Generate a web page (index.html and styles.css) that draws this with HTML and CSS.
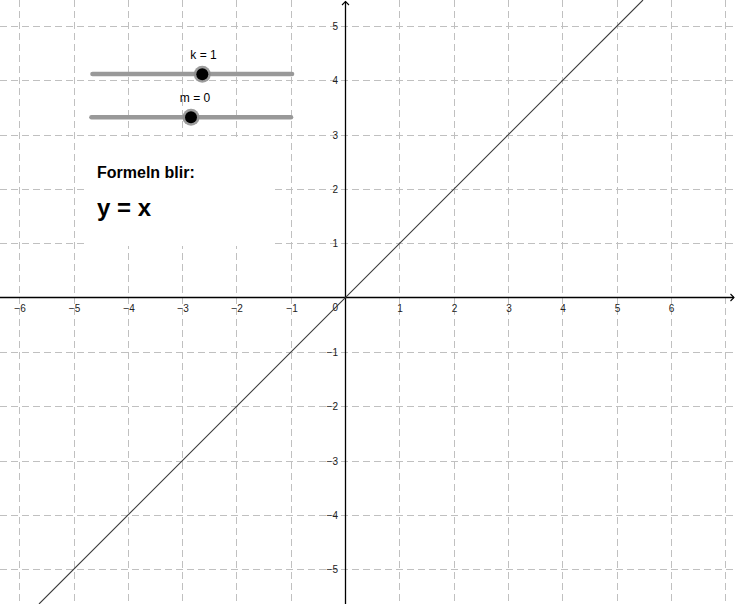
FILE: index.html
```html
<!DOCTYPE html>
<html lang="sv">
<head>
<meta charset="utf-8">
<title>Formeln blir</title>
<link rel="stylesheet" href="styles.css">
</head>
<body>
<div class="applet">
  <svg class="canvas" width="735" height="604" viewBox="0 0 735 604" xmlns="http://www.w3.org/2000/svg">
    <g class="grid">
      <line x1="19.5" y1="0" x2="19.5" y2="604"/>
      <line x1="74.5" y1="0" x2="74.5" y2="604"/>
      <line x1="128.5" y1="0" x2="128.5" y2="604"/>
      <line x1="182.5" y1="0" x2="182.5" y2="604"/>
      <line x1="236.5" y1="0" x2="236.5" y2="604"/>
      <line x1="291.5" y1="0" x2="291.5" y2="604"/>
      <line x1="399.5" y1="0" x2="399.5" y2="604"/>
      <line x1="454.5" y1="0" x2="454.5" y2="604"/>
      <line x1="508.5" y1="0" x2="508.5" y2="604"/>
      <line x1="562.5" y1="0" x2="562.5" y2="604"/>
      <line x1="617.5" y1="0" x2="617.5" y2="604"/>
      <line x1="671.5" y1="0" x2="671.5" y2="604"/>
      <line x1="725.5" y1="0" x2="725.5" y2="604"/>
      <line x1="0" y1="26.5" x2="735" y2="26.5"/>
      <line x1="0" y1="80.5" x2="735" y2="80.5"/>
      <line x1="0" y1="135.5" x2="735" y2="135.5"/>
      <line x1="0" y1="189.5" x2="735" y2="189.5"/>
      <line x1="0" y1="243.5" x2="735" y2="243.5"/>
      <line x1="0" y1="352.5" x2="735" y2="352.5"/>
      <line x1="0" y1="406.5" x2="735" y2="406.5"/>
      <line x1="0" y1="461.5" x2="735" y2="461.5"/>
      <line x1="0" y1="515.5" x2="735" y2="515.5"/>
      <line x1="0" y1="569.5" x2="735" y2="569.5"/>
    </g>
    <g class="axes">
      <line x1="0" y1="297.5" x2="734" y2="297.5"/>
      <line x1="345.5" y1="604" x2="345.5" y2="1.5"/>
      <polyline points="730.5,294 734,297.5 730.5,301"/>
      <polyline points="342,5 345.5,1.5 349,5"/>
    </g>
    <g class="xlabels">
      <text x="20" y="312">−6</text>
      <text x="74.5" y="312">−5</text>
      <text x="129" y="312">−4</text>
      <text x="183" y="312">−3</text>
      <text x="237" y="312">−2</text>
      <text x="292" y="312">−1</text>
      <text x="400" y="312">1</text>
      <text x="454.5" y="312">2</text>
      <text x="509" y="312">3</text>
      <text x="563" y="312">4</text>
      <text x="617.5" y="312">5</text>
      <text x="671.5" y="312">6</text>
    </g>
    <g class="ylabels">
      <text x="338" y="30">5</text>
      <text x="338" y="84">4</text>
      <text x="338" y="139">3</text>
      <text x="338" y="193">2</text>
      <text x="338" y="247">1</text>
      <text x="338" y="310.5">0</text>
      <text x="338" y="356">−1</text>
      <text x="338" y="410">−2</text>
      <text x="338" y="465">−3</text>
      <text x="338" y="519">−4</text>
      <text x="338" y="573">−5</text>
    </g>
    <line class="graph" x1="39" y1="604" x2="643" y2="0"/>
    <g class="slider">
      <line class="track" x1="92.5" y1="74" x2="292" y2="74"/>
      <circle class="halo" cx="202.3" cy="74.3" r="8.5"/>
      <circle class="knob" cx="202.3" cy="74.3" r="6"/>
      <text class="slabel" x="203.5" y="59">k = 1</text>
    </g>
    <g class="slider">
      <line class="track" x1="91.5" y1="117.3" x2="291" y2="117.3"/>
      <circle class="halo" cx="191" cy="117.3" r="8.5"/>
      <circle class="knob" cx="191" cy="117.3" r="6"/>
      <text class="slabel" x="195" y="102">m = 0</text>
    </g>
  </svg>
  <div class="formula">
    <div class="caption">Formeln blir:</div>
    <div class="equation">y = x</div>
  </div>
</div>
</body>
</html>
```
FILE: styles.css
```css
html, body {
  margin: 0;
  padding: 0;
  background: #ffffff;
  overflow: hidden;
}

.applet {
  position: relative;
  width: 735px;
  height: 604px;
  font-family: "Liberation Sans", Arial, sans-serif;
}

.canvas {
  display: block;
}

.grid line {
  stroke: #c0c0c0;
  stroke-width: 1;
  stroke-dasharray: 7 4;
}

.axes line {
  stroke: #000000;
  stroke-width: 1.3;
}

.axes polyline {
  fill: none;
  stroke: #000000;
  stroke-width: 1.1;
}

.xlabels text,
.ylabels text {
  font-family: "Liberation Sans", Arial, sans-serif;
  font-size: 10px;
  fill: #222222;
}

.xlabels text {
  text-anchor: middle;
}

.ylabels text {
  text-anchor: end;
}

.graph {
  stroke: #3a3a3a;
  stroke-width: 1.1;
}

.track {
  stroke: #999999;
  stroke-width: 4.6;
  stroke-linecap: round;
}

.halo {
  fill: #8c8c8c;
  opacity: 0.85;
}

.knob {
  fill: #000000;
}

.slabel {
  font-family: "Liberation Sans", Arial, sans-serif;
  font-size: 12px;
  fill: #000000;
  text-anchor: middle;
}

.formula {
  position: absolute;
  left: 85px;
  top: 137px;
  width: 186px;
  height: 109px;
  box-sizing: border-box;
  padding: 27px 0 0 12px;
  background: #ffffff;
  display: flex;
  flex-direction: column;
  gap: 11.5px;
  color: #000000;
  font-weight: bold;
}

.caption {
  font-size: 16px;
  line-height: 18px;
}

.equation {
  font-size: 24px;
  line-height: 28px;
}
```
